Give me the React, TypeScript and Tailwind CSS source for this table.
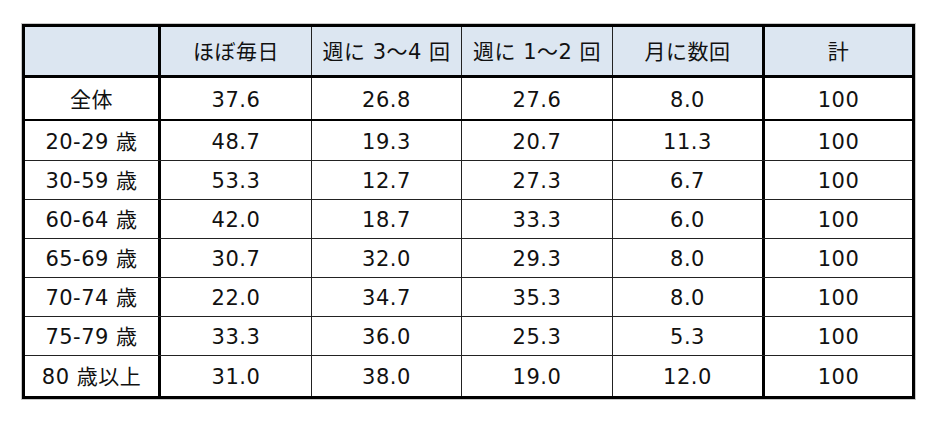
const headers = ['', 'ほぼ毎日', '週に 3～4 回', '週に 1～2 回', '月に数回', '計'];

const rows: string[][] = [
  ['全体', '37.6', '26.8', '27.6', '8.0', '100'],
  ['20-29 歳', '48.7', '19.3', '20.7', '11.3', '100'],
  ['30-59 歳', '53.3', '12.7', '27.3', '6.7', '100'],
  ['60-64 歳', '42.0', '18.7', '33.3', '6.0', '100'],
  ['65-69 歳', '30.7', '32.0', '29.3', '8.0', '100'],
  ['70-74 歳', '22.0', '34.7', '35.3', '8.0', '100'],
  ['75-79 歳', '33.3', '36.0', '25.3', '5.3', '100'],
  ['80 歳以上', '31.0', '38.0', '19.0', '12.0', '100'],
];

// cell widths include the right border
const colClass = [
  'w-[136px] border-r-[3px] border-black',
  'w-[151px] border-r border-[#222]',
  'w-[150px] border-r border-[#222]',
  'w-[151px] border-r border-[#222]',
  'w-[152px] border-r-[3px] border-black',
  'w-[147px]',
];

const rowClass = [
  'h-[43px] border-b-2 border-black',
  'h-[40px] border-b border-[#222]',
  'h-[39px] border-b border-[#222]',
  'h-[39px] border-b border-[#222]',
  'h-[39px] border-b border-[#222]',
  'h-[39px] border-b border-[#222]',
  'h-[39px] border-b border-[#222]',
  'h-[40px]',
];

function Cell({ text, i }: { text: string; i: number }) {
  return (
    <div className={`${colClass[i]} shrink-0 h-full pt-[3px] flex items-center justify-center box-border`}>
      {text}
    </div>
  );
}

export default function App() {
  return (
    <div className="w-[940px] h-[425px] bg-white pt-[24px] pl-[22px]">
      <div
        className="w-[893px] border-[3px] border-black box-border shadow-[0_0_0_1px_#c8c8c8] text-[21px] tracking-[0.5px] text-[#111] leading-none"
        style={{ fontFamily: '"DejaVu Sans", "Noto Sans CJK JP", sans-serif' }}
      >
        <div className="flex h-[51px] bg-[#dce6f1] border-b-[3px] border-black box-border">
          {headers.map((h, i) => (
            <Cell key={i} text={h} i={i} />
          ))}
        </div>
        {rows.map((r, ri) => (
          <div key={ri} className={`flex box-border ${rowClass[ri]}`}>
            {r.map((c, i) => (
              <Cell key={i} text={c} i={i} />
            ))}
          </div>
        ))}
      </div>
    </div>
  );
}
